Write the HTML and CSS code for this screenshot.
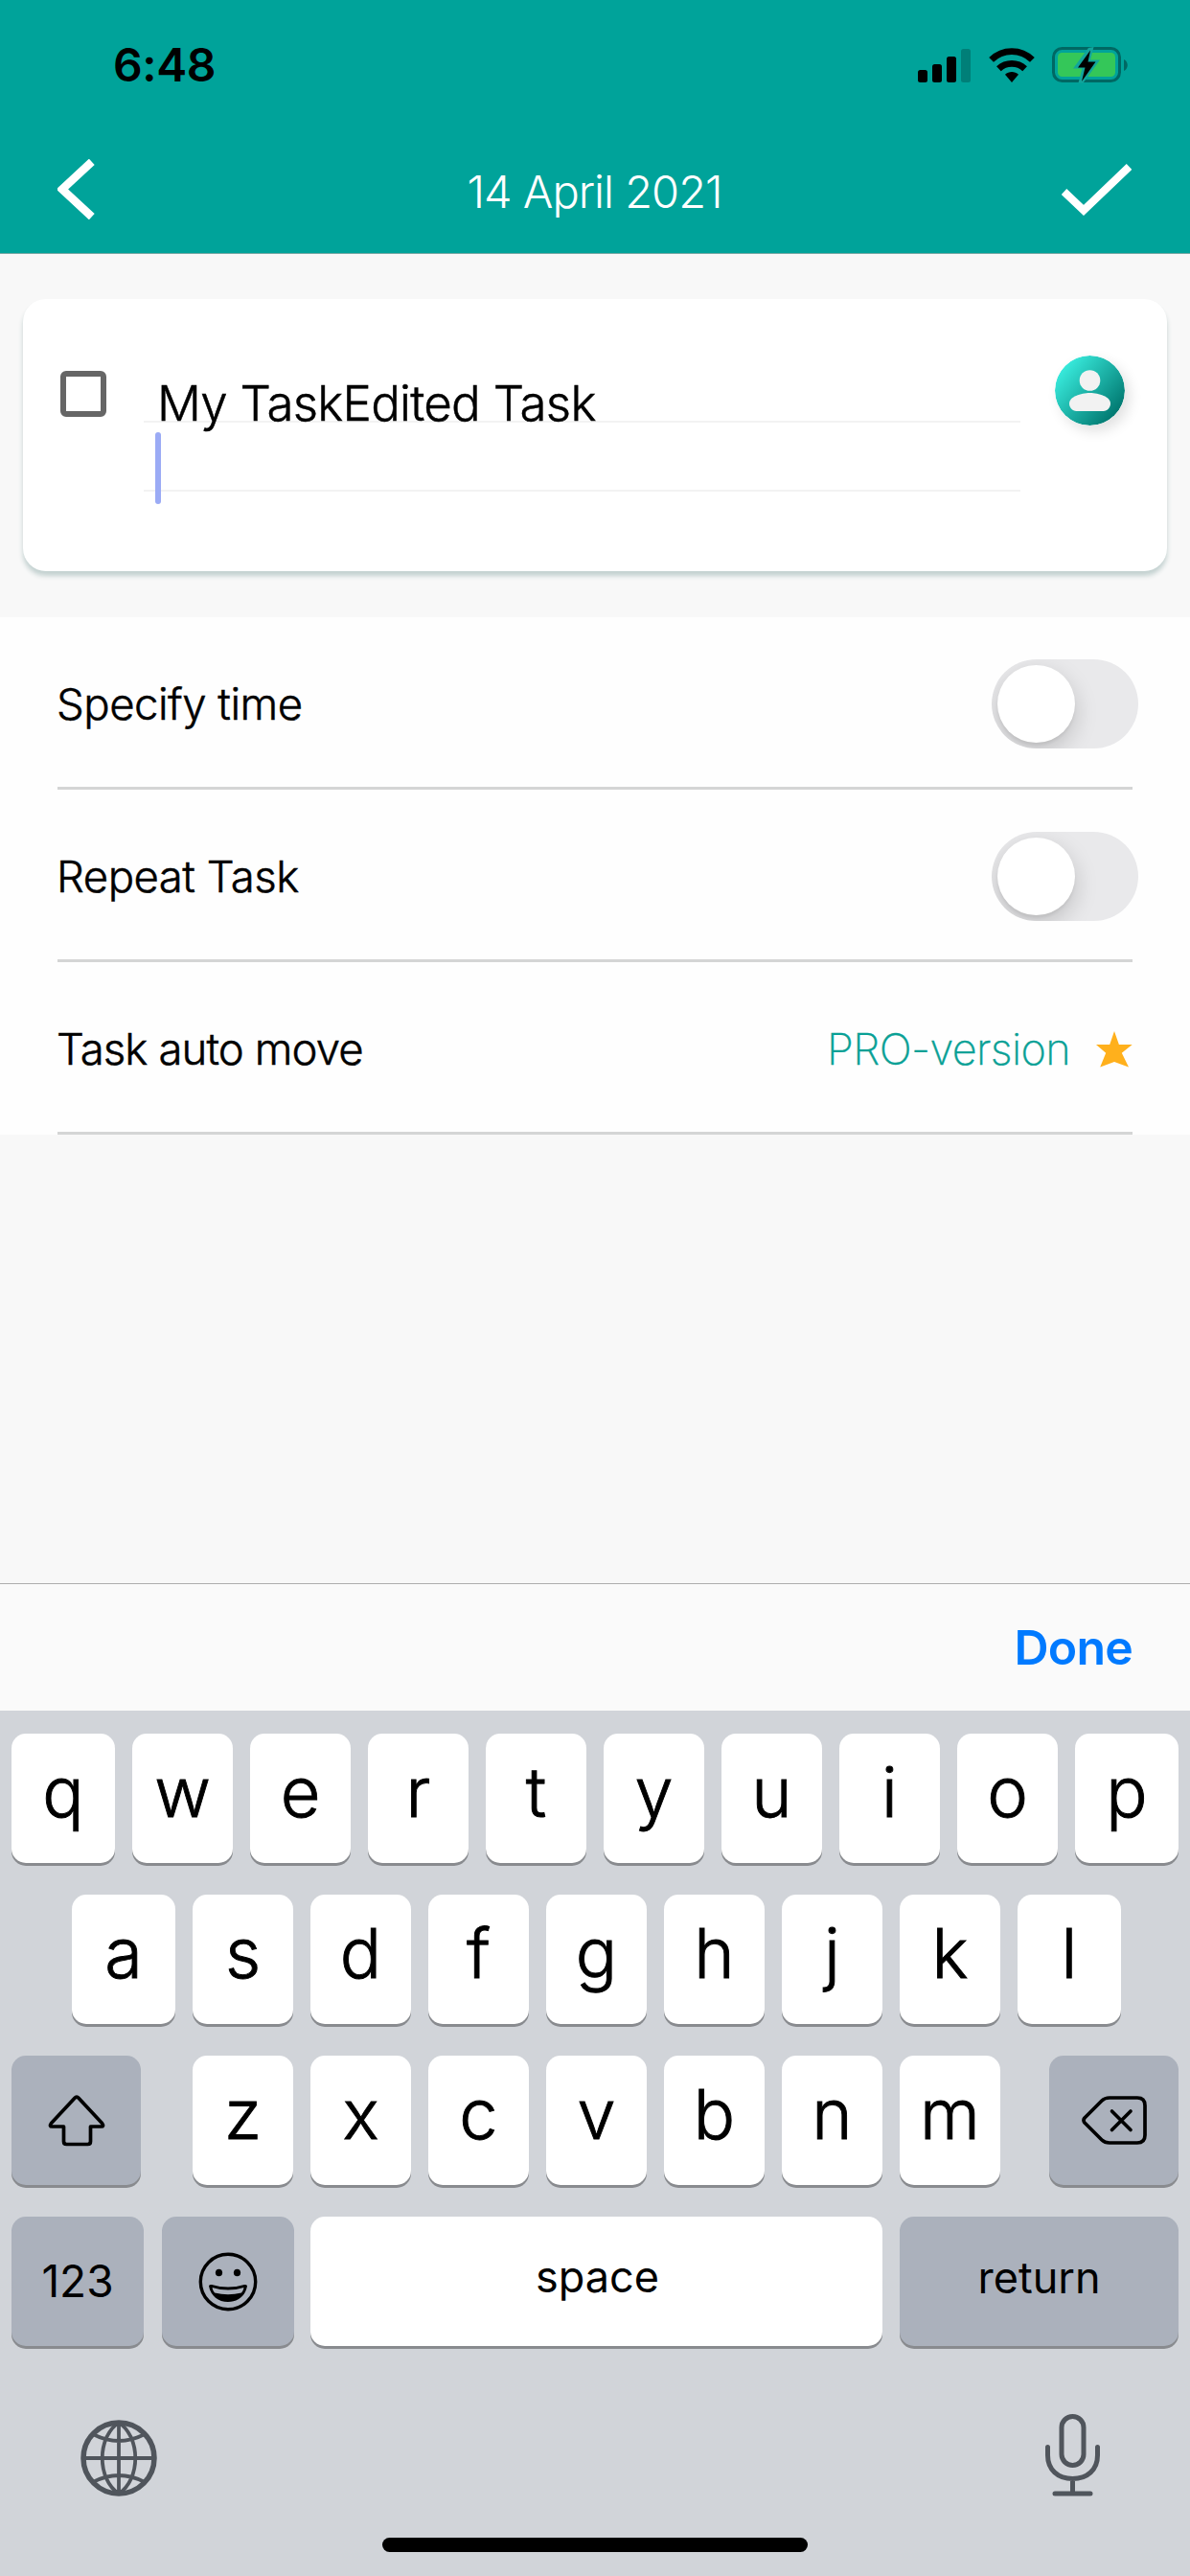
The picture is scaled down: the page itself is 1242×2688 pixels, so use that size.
FILE: index.html
```html
<!DOCTYPE html>
<html lang="en">
<head>
<meta charset="utf-8">
<title>Edit task</title>
<link rel="stylesheet" href="styles.css">
</head>
<body>
<div class="screen">
  <header class="header">
    <div class="status">
      <span class="clock">6:48</span>
      <div class="status-icons">
        <svg class="signal" width="56" height="36" viewBox="0 0 56 36">
          <rect x="0" y="23" width="10" height="13" rx="2.5"/>
          <rect x="15" y="17" width="10" height="19" rx="2.5"/>
          <rect x="30" y="9" width="10" height="27" rx="2.5"/>
          <rect x="45" y="1" width="10" height="35" rx="2.5" opacity=".22"/>
        </svg>
        <svg class="wifi" width="48" height="36" viewBox="0 0 48 36">
          <g fill="none" stroke="#000" stroke-width="6.8">
            <path d="M2.6 12.4C14.5 .6 33.500 .6 45.400 12.4"/>
            <path d="M10.400 21.800C18 14.600 30 14.600 37.600 21.800"/>
          </g>
          <path d="M24 36l-7-8.300c4-3.500 10-3.500 14 0z"/>
        </svg>
        <svg class="battery" width="80" height="38" viewBox="0 0 80 38">
          <rect x="1.500" y="1.500" width="69" height="34" rx="9" fill="none" stroke="#006863" stroke-width="3"/>
          <path d="M75 13c5 2 5 10 0 12z" fill="#006863"/>
          <rect x="6" y="6" width="60" height="25" rx="4.500" fill="#34c759"/>
          <path d="M38 1L22 22.500h9.500L27.500 37.500h5L50 13.500H40L43.500 0z" fill="#12a59c"/>
          <path d="M40 3.500L27 21.500h7.500L31 36 45.500 15.500H37.500z"/>
        </svg>
      </div>
    </div>
    <nav class="nav">
      <svg class="back" width="39" height="63" viewBox="0 0 39 63"><path d="M35.800 2.800L5 31.500l30.800 28.700" fill="none" stroke="#fff" stroke-width="8.500"/></svg>
      <h1 class="title">14 April 2021</h1>
      <svg class="check" width="73" height="54" viewBox="0 0 73 54"><path d="M2.500 29L23 48.500 70.500 3" fill="none" stroke="#fff" stroke-width="8"/></svg>
    </nav>
  </header>

  <main class="main">
    <section class="card">
      <span class="checkbox"></span>
      <div class="editor">
        <div class="line">My TaskEdited Task</div>
        <div class="line"><span class="caret"></span></div>
      </div>
      <svg class="avatar" width="73" height="73" viewBox="0 0 73 73">
        <defs><linearGradient id="teal" x1=".12" y1=".2" x2=".88" y2=".85">
          <stop offset="0" stop-color="#37e8da"/><stop offset="1" stop-color="#00776f"/>
        </linearGradient></defs>
        <circle cx="36.500" cy="36.500" r="36.500" fill="url(#teal)"/>
        <circle cx="36.500" cy="26" r="10.800" fill="#f2f2f2"/>
        <path d="M15 50C15 43 27 39 36.500 39S58 43 58 50C58 54 55 58 50.500 58h-28C18 58 15 54 15 50z" fill="#f2f2f2"/>
      </svg>
    </section>

    <section class="settings">
      <div class="row"><span class="label">Specify time</span><span class="toggle"><i class="knob"></i></span></div>
      <div class="row"><span class="label">Repeat Task</span><span class="toggle"><i class="knob"></i></span></div>
      <div class="row"><span class="label tight">Task auto move</span>
        <span class="pro"><span class="pro-text">PRO-version</span>
        <svg width="38" height="38" viewBox="0 0 38 38"><path d="M19 0l4.900 14H37.700L26.800 22.800 34 37.600 19 32 4.200 37.600 10.200 22.800 0 14H14.200z" fill="#ffb01c"/></svg></span>
      </div>
    </section>
  </main>

  <div class="toolbar"><span class="done">Done</span></div>

  <div class="keyboard">
    <div class="keys first">
      <span class="key wide">q</span><span class="key">w</span><span class="key">e</span><span class="key">r</span><span class="key">t</span><span class="key">y</span><span class="key">u</span><span class="key">i</span><span class="key">o</span><span class="key wide">p</span>
    </div>
    <div class="keys second">
      <span class="key wide">a</span><span class="key">s</span><span class="key">d</span><span class="key">f</span><span class="key">g</span><span class="key">h</span><span class="key">j</span><span class="key">k</span><span class="key wide">l</span>
    </div>
    <div class="keys third">
      <span class="key dark mod">
        <svg width="60" height="54" viewBox="0 0 60 54"><path d="M28 3.200Q30 1 32 3.200L56.500 29.500Q59 33 55.500 33H44.500V48.500Q44.500 51.500 41.500 51.500H19.500Q16.500 51.500 16.500 48.500V33H4.500Q1 33 3.500 29.500z" fill="none" stroke="#000" stroke-width="3.700" stroke-linejoin="round"/></svg>
      </span>
      <div class="letters"><span class="key">z</span><span class="key">x</span><span class="key">c</span><span class="key">v</span><span class="key">b</span><span class="key">n</span><span class="key">m</span></div>
      <span class="key dark mod">
        <svg width="68" height="51" viewBox="0 0 68 51"><g fill="none" stroke="#000" stroke-width="3.700" stroke-linecap="round" stroke-linejoin="round"><path d="M29 2H58Q66 2 66 10V41Q66 49 58 49H29Q24 49 21 46L3 28Q1 25.500 3 23L21 5Q24 2 29 2z"/><path d="M31.500 16l19.500 19.500M51 16L31.500 35.500"/></g></svg>
      </span>
    </div>
    <div class="keys fourth">
      <span class="key dark small num">123</span>
      <span class="key dark emoji">
        <svg width="62" height="62" viewBox="0 0 62 62"><circle cx="31" cy="31" r="28.700" fill="none" stroke="#000" stroke-width="3.400"/><ellipse cx="21.500" cy="21.500" rx="3.600" ry="3.800"/><ellipse cx="40.500" cy="21.500" rx="3.600" ry="3.800"/><path d="M11 35.500Q11 33.500 14 34Q31 39 48 34Q51 33.500 51 35.500C49 46 41 52 31 52S13 46 11 35.500z"/><path d="M14.500 37Q31 42 47.500 37Q47 40.500 45 42.500Q31 46 17 42.500Q15 40.500 14.500 37z" fill="#abb1bc"/></svg>
      </span>
      <span class="key small space">space</span>
      <span class="key dark small return">return</span>
    </div>
    <div class="bottom">
      <svg class="globe" width="80" height="80" viewBox="0 0 80 80"><g fill="none" stroke="#50555c"><circle cx="40" cy="40" r="37" stroke-width="5.500"/><path stroke-width="3.800" d="M40 3v74M3 40h74M40 3C17 18 17 62 40 77M40 3C63 18 63 62 40 77M13 15Q40 29 67 15M13 65Q40 51 67 65"/></g></svg>
      <svg class="mic" width="57" height="86" viewBox="0 0 57 86"><g fill="none" stroke="#50555c" stroke-width="5" stroke-linecap="round"><rect x="17" y="2.500" width="23" height="51" rx="11.500"/><path d="M2.500 34.500V43C2.500 58 13 67.500 28.500 67.500S54.500 58 54.500 43V34.500M28.500 68V82M10 83h37"/></g></svg>
    </div>
    <div class="home"></div>
  </div>
</div>
</body>
</html>
```
FILE: styles.css
```css
* { box-sizing: border-box; }
body { margin: 0; font-family: Inter, "Liberation Sans", sans-serif; color: #000; }
svg { display: block; flex: none; }
.screen { width: 1242px; height: 2688px; display: flex; flex-direction: column; background: #f8f8f8; overflow: hidden; }

.header { height: 265px; background: #00a39a; border-bottom: 1px solid #76a7a3; }
.status { height: 135px; display: flex; justify-content: space-between; align-items: center; padding: 0 64px 0 118px; }
.clock { font-size: 48px; font-weight: 600; letter-spacing: -0.4px; }
.status-icons { display: flex; align-items: center; }
.wifi { margin-left: 18px; }
.battery { margin-left: 18px; }
.nav { height: 129px; display: flex; justify-content: space-between; align-items: center; padding: 0 61px 4px 60px; }
.title { margin: 4px 0 0 14px; font-size: 47px; font-weight: 300; letter-spacing: -1px; color: #fff; white-space: nowrap; padding-left: 20px; }

.main { height: 1387px; }
.card { height: 284px; margin: 47px 24px 48px; display: flex; align-items: flex-start; background: #fff; border-radius: 24px; box-shadow: 0 5px 5px #c3d1d0; }
.checkbox { flex: none; width: 48px; height: 48px; margin: 75px 0 0 39px; border: 6px solid #666; border-radius: 6px; }
.editor { width: 915px; margin: 57px 36px 0 39px; }
.line { position: relative; height: 72px; padding: 31px 0 0 14px; border-bottom: 2px solid #f2f2f2; font-size: 51px; font-weight: 300; -webkit-text-stroke: .5px #000; line-height: 41px; letter-spacing: -.75px; white-space: nowrap; }
.caret { position: absolute; left: 12px; top: 10px; width: 6px; height: 75px; border-radius: 3px; background: #9babf5; }
.avatar { margin-top: 59px; border-radius: 50%; box-shadow: 5px 6px 14px rgba(0, 0, 0, .12); }

.settings { background: #fefefe; padding: 0 60px; }
.row { height: 180px; padding-top: 4px; display: flex; align-items: center; justify-content: space-between; border-bottom: 3px solid #d4d5d5; font-size: 45.500px; white-space: nowrap; }
.label { margin-left: -1px; font-weight: 300; -webkit-text-stroke: .5px #000; letter-spacing: -.5px; }
.tight { letter-spacing: -.9px; }
.toggle { width: 153px; height: 93px; margin-right: -6px; padding: 6px; border-radius: 47px; background: #e9e9eb; overflow: hidden; }
.knob { display: block; width: 81px; height: 81px; border-radius: 50%; background: #fff; box-shadow: 0 9px 24px rgba(0, 0, 0, .18), 0 3px 3px rgba(0, 0, 0, .05); }
.pro { display: flex; align-items: center; gap: 27px; font-weight: 200; -webkit-text-stroke: .4px #08a095; color: #08a095; }
.pro-text { font-size: 45px; letter-spacing: -.6px; }

.toolbar { height: 133px; display: flex; align-items: center; justify-content: flex-end; padding-right: 60px; background: #fafafa; border-top: 1px solid #adadad; }
.done { font-size: 50px; font-weight: 600; letter-spacing: -.8px; color: #007aff; }

.keyboard { height: 903px; padding-top: 24px; background: #d1d4d9; }
.keys { height: 135px; margin-bottom: 33px; padding: 0 12px; display: flex; gap: 18px; }
.second { padding-left: 75px; }
.third { justify-content: space-between; }
.letters { display: flex; gap: 18px; margin-left: 3px; }
.key { flex: none; width: 105px; height: 135px; border-radius: 15px; background: #fff; box-shadow: 0 3px 0 #898b8f; text-align: center; font-size: 72px; font-weight: 300; -webkit-text-stroke: .9px #000; line-height: 122px; }
.wide { width: 108px; }
.dark { display: flex; align-items: center; justify-content: center; background: #abb1bc; }
.mod { width: 135px; }
.small { font-size: 45px; font-weight: 400; -webkit-text-stroke: 0; line-height: 126px; }
.num { width: 138px; font-size: 46px; line-height: 135px; }
.emoji { width: 138px; margin: 0 -1px 0 1px; }
.space { width: 597px; padding-left: 2px; }
.return { flex: 1; padding-bottom: 8px; }
.bottom { height: 87px; margin-top: 70px; padding: 0 94px 0 84px; display: flex; justify-content: space-between; align-items: flex-end; }
.home { width: 444px; height: 15px; margin: 43px auto 0; border-radius: 8px; background: #000; }
```
